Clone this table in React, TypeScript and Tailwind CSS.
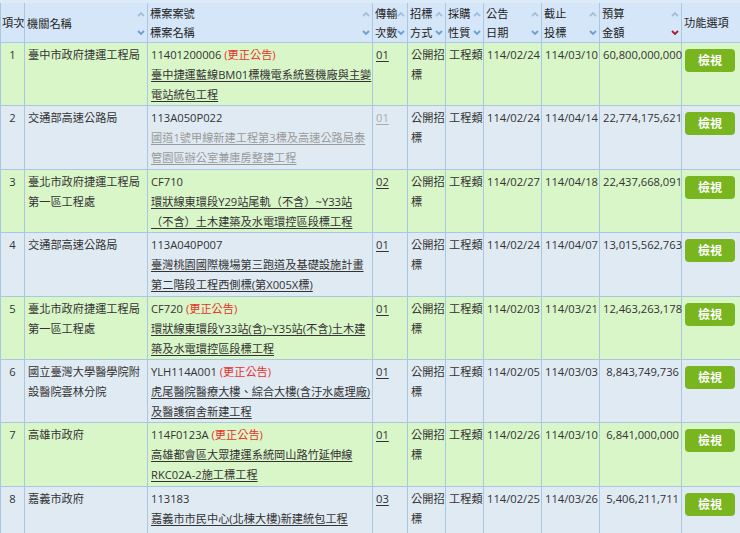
import React from "react";

type Row = {
  no: number;
  org: string;
  code: string;
  fix?: boolean;
  title: string[];
  times: string;
  visited?: boolean;
  start: string;
  end: string;
  budget: string;
};

const rows: Row[] = [
  {
    no: 1,
    org: "臺中市政府捷運工程局",
    code: "11401200006",
    fix: true,
    title: ["臺中捷運藍線BM01標機電系統暨機廠與主變", "電站統包工程"],
    times: "01",
    start: "114/02/24",
    end: "114/03/10",
    budget: "60,800,000,000",
  },
  {
    no: 2,
    org: "交通部高速公路局",
    code: "113A050P022",
    title: ["國道1號甲線新建工程第3標及高速公路局泰", "管園區辦公室兼庫房整建工程"],
    times: "01",
    visited: true,
    start: "114/02/24",
    end: "114/04/14",
    budget: "22,774,175,621",
  },
  {
    no: 3,
    org: "臺北市政府捷運工程局第一區工程處",
    code: "CF710",
    title: ["環狀線東環段Y29站尾軌（不含）~Y33站", "（不含）土木建築及水電環控區段標工程"],
    times: "02",
    start: "114/02/27",
    end: "114/04/18",
    budget: "22,437,668,091",
  },
  {
    no: 4,
    org: "交通部高速公路局",
    code: "113A040P007",
    title: ["臺灣桃園國際機場第三跑道及基礎設施計畫", "第二階段工程西側標(第X005X標)"],
    times: "01",
    start: "114/02/24",
    end: "114/04/07",
    budget: "13,015,562,763",
  },
  {
    no: 5,
    org: "臺北市政府捷運工程局第一區工程處",
    code: "CF720",
    fix: true,
    title: ["環狀線東環段Y33站(含)~Y35站(不含)土木建", "築及水電環控區段標工程"],
    times: "01",
    start: "114/02/03",
    end: "114/03/21",
    budget: "12,463,263,178",
  },
  {
    no: 6,
    org: "國立臺灣大學醫學院附設醫院雲林分院",
    code: "YLH114A001",
    fix: true,
    title: ["虎尾醫院醫療大樓、綜合大樓(含汙水處理廠)", "及醫護宿舍新建工程"],
    times: "01",
    start: "114/02/05",
    end: "114/03/03",
    budget: "8,843,749,736",
  },
  {
    no: 7,
    org: "高雄市政府",
    code: "114F0123A",
    fix: true,
    title: ["高雄都會區大眾捷運系統岡山路竹延伸線", "RKC02A-2施工標工程"],
    times: "01",
    start: "114/02/26",
    end: "114/03/10",
    budget: "6,841,000,000",
  },
  {
    no: 8,
    org: "嘉義市政府",
    code: "113183",
    title: ["嘉義市市民中心(北棟大樓)新建統包工程"],
    times: "03",
    start: "114/02/25",
    end: "114/03/26",
    budget: "5,406,211,711",
  },
];

function UpArrow() {
  return (
    <svg width="8" height="6" viewBox="0 0 8 6">
      <polyline points="1,5 4,2 7,5" fill="none" stroke="#a3c0da" strokeWidth="1.8" />
    </svg>
  );
}

function DownArrow({ active }: { active?: boolean }) {
  return (
    <svg width="8" height="6" viewBox="0 0 8 6">
      <polyline
        points="1,1 4,4 7,1"
        fill="none"
        stroke={active ? "#b0182a" : "#6f9fd2"}
        strokeWidth="1.8"
      />
    </svg>
  );
}

// header cell: label lines on the left, sort arrows on the right
function SortHead({ lines, active }: { lines: string[]; active?: boolean }) {
  return (
    <div className="flex justify-between h-[38px]">
      <div className={lines.length === 1 ? "flex items-center" : ""}>
        {lines.map((l) => (
          <div key={l} className="leading-[19px] whitespace-nowrap">
            {l}
          </div>
        ))}
      </div>
      <div className="flex flex-col pr-[2px]">
        <div className="h-[19px] flex items-center">
          <UpArrow />
        </div>
        <div className="h-[19px] flex items-center">
          <DownArrow active={active} />
        </div>
      </div>
    </div>
  );
}

const th = "border border-[#a9c6e2] align-top pt-[1px] pl-[2px] font-normal text-left";
const td = "border border-[#a9c6e2] align-top pt-[2px] pl-[3px] leading-[20px]";

export default function App() {
  return (
    <div
      className="w-[740px] h-[533px] overflow-hidden bg-white text-[#333] text-[11.2px]"
      style={{ fontFamily: '"Open Sans", "Noto Sans CJK TC", sans-serif' }}
    >
      <table className="table-fixed border-collapse w-[740px] border-t-[3px] border-t-[#dce9f6]">
        <colgroup>
          <col className="w-[24px]" />
          <col className="w-[123px]" />
          <col className="w-[225px]" />
          <col className="w-[35px]" />
          <col className="w-[38px]" />
          <col className="w-[38px]" />
          <col className="w-[58px]" />
          <col className="w-[58px]" />
          <col className="w-[82px]" />
          <col className="w-[59px]" />
        </colgroup>
        <thead>
          <tr className="bg-[#d4e6f8] text-[#222]">
            <th className={th + " !pl-[1px]"}>
              <div className="h-[38px] flex items-center whitespace-nowrap">項次</div>
            </th>
            <th className={th}>
              <SortHead lines={["機關名稱"]} />
            </th>
            <th className={th}>
              <SortHead lines={["標案案號", "標案名稱"]} />
            </th>
            <th className={th}>
              <SortHead lines={["傳輸", "次數"]} />
            </th>
            <th className={th}>
              <SortHead lines={["招標", "方式"]} />
            </th>
            <th className={th}>
              <SortHead lines={["採購", "性質"]} />
            </th>
            <th className={th}>
              <SortHead lines={["公告", "日期"]} />
            </th>
            <th className={th}>
              <SortHead lines={["截止", "投標"]} />
            </th>
            <th className={th}>
              <SortHead lines={["預算", "金額"]} active />
            </th>
            <th className={th}>
              <div className="h-[38px] flex items-center whitespace-nowrap">功能選項</div>
            </th>
          </tr>
        </thead>
        <tbody>
          {rows.map((r, i) => (
            <tr key={r.no} className={i % 2 === 0 ? "bg-[#d9f6c8]" : "bg-[#e0eaf3]"}>
              <td className={td + " text-center !pl-0"}>
                <div className="h-[60.4px]">{r.no}</div>
              </td>
              <td className={td}>{r.org}</td>
              <td className={td + " whitespace-nowrap"}>
                <div>
                  {r.code}
                  {r.fix && <span className="text-[#e8312c]"> (更正公告)</span>}
                </div>
                {r.title.map((t) => (
                  <div key={t}>
                    <a
                      href="#"
                      className={
                        "underline underline-offset-2 " + (r.visited ? "text-[#9a9a9a]" : "text-[#333]")
                      }
                    >
                      {t}
                    </a>
                  </div>
                ))}
              </td>
              <td className={td}>
                <a
                  href="#"
                  className={"underline underline-offset-2 " + (r.visited ? "text-[#aaa]" : "text-[#333]")}
                >
                  {r.times}
                </a>
              </td>
              <td className={td}>公開招標</td>
              <td className={td + " whitespace-nowrap"}>工程類</td>
              <td className={td + " whitespace-nowrap"}>{r.start}</td>
              <td className={td + " whitespace-nowrap"}>{r.end}</td>
              <td className={td + " text-right pr-[2px] whitespace-nowrap"}>{r.budget}</td>
              <td className={td}>
                <button className="mt-[4px] w-[50px] h-[23px] rounded-[4px] bg-[#78b51f] text-white font-bold text-[12px] leading-[23px]">
                  檢視
                </button>
              </td>
            </tr>
          ))}
        </tbody>
      </table>
    </div>
  );
}
